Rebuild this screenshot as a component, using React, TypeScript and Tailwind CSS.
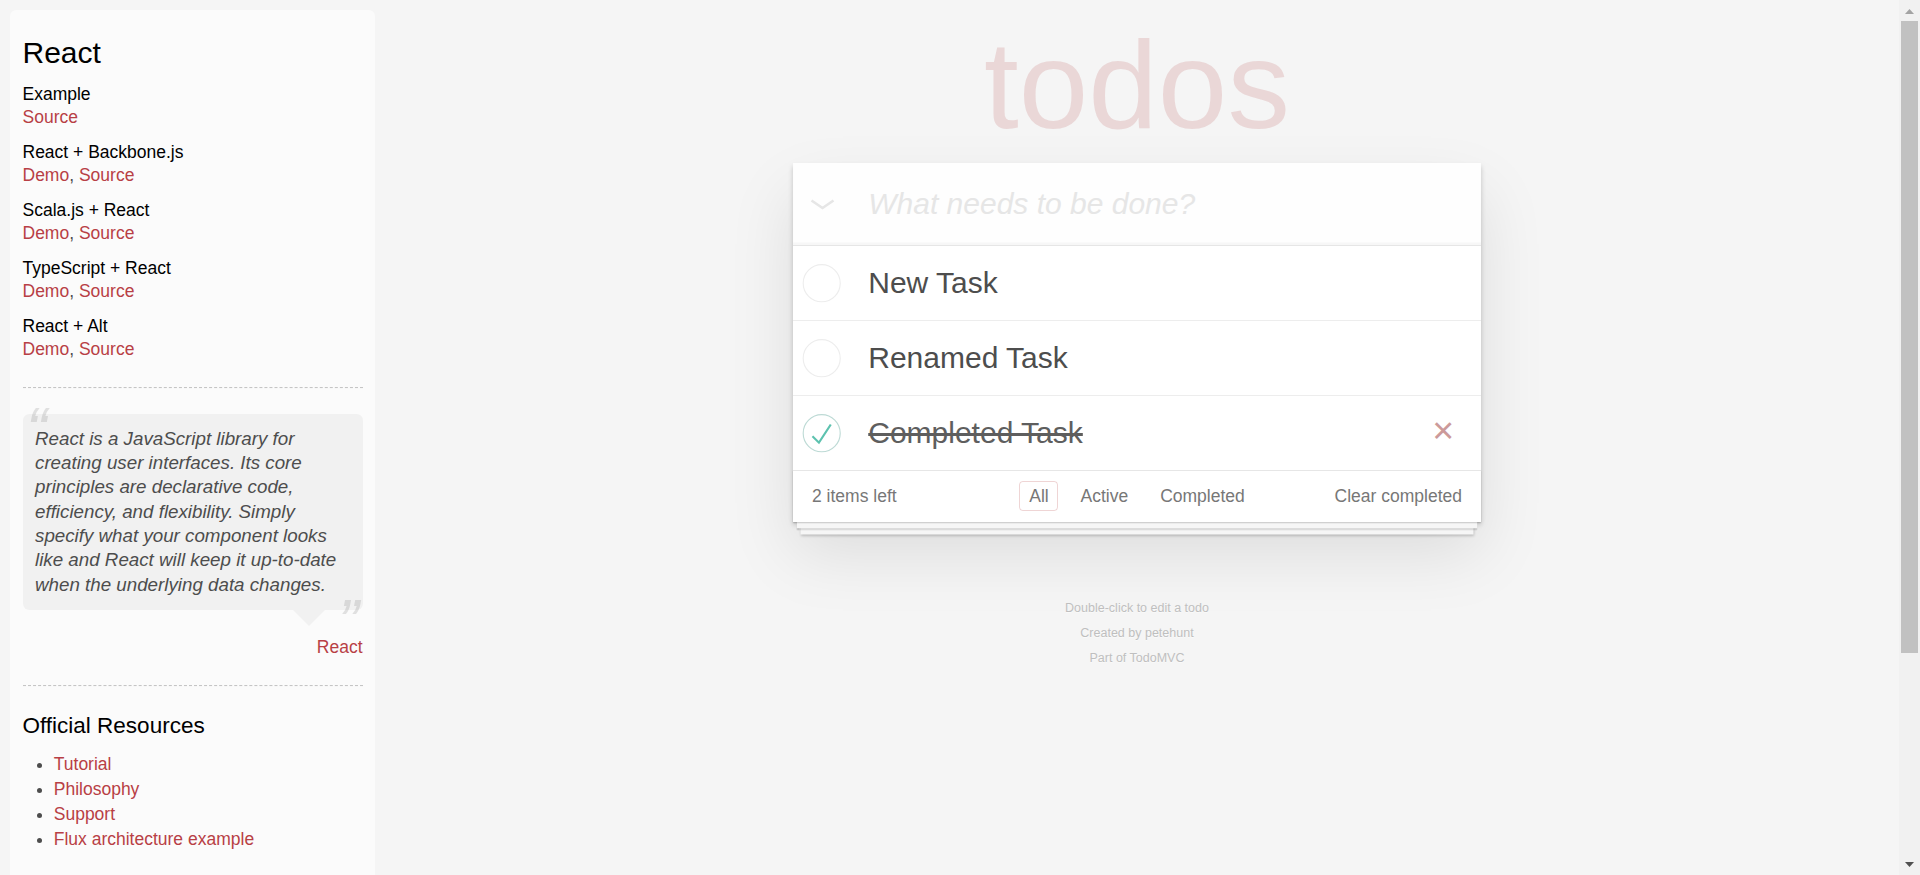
import React from "react";

const groups: { title: string; links: string[] }[] = [
  { title: "Example", links: ["Source"] },
  { title: "React + Backbone.js", links: ["Demo", "Source"] },
  { title: "Scala.js + React", links: ["Demo", "Source"] },
  { title: "TypeScript + React", links: ["Demo", "Source"] },
  { title: "React + Alt", links: ["Demo", "Source"] },
];

const quoteLines = [
  "React is a JavaScript library for",
  "creating user interfaces. Its core",
  "principles are declarative code,",
  "efficiency, and flexibility. Simply",
  "specify what your component looks",
  "like and React will keep it up-to-date",
  "when the underlying data changes.",
];

const resources = ["Tutorial", "Philosophy", "Support", "Flux architecture example"];
const community = ["ReactJS on Stack Overflow", "Google Groups Mailing List", "IRC"];

const todos = [
  { title: "New Task", done: false },
  { title: "Renamed Task", done: false },
  { title: "Completed Task", done: true },
];

function Toggle({ checked }: { checked: boolean }) {
  return (
    <svg width="50" height="50" viewBox="-10 -18 100 135" className="shrink-0">
      <circle
        cx="50"
        cy="50"
        r="50"
        fill="none"
        stroke={checked ? "#bddad5" : "#ededed"}
        strokeWidth="3"
      />
      {checked && <path fill="#5dc2af" d="M72 25L42 71 27 56l-4 4 20 20 34-52z" />}
    </svg>
  );
}

function Dashed({ className }: { className: string }) {
  return (
    <div
      className={
        "h-0 border-t border-b border-dashed border-t-[#c5c5c5] border-b-[#f7f7f7] " + className
      }
    />
  );
}

function Sidebar() {
  return (
    <aside className="flex w-[365px] flex-col rounded-[6.25px] bg-[rgba(255,255,255,0.6)] p-[12.5px] pb-[60px] text-[17.5px] leading-[24.5px] text-[#4d4d4d]">
      <h3 className="mt-[12.5px] text-[30px] leading-[36px] text-black">React</h3>
      {groups.map((g) => (
        <div key={g.title} className="mt-[12.5px]">
          <h5 className="text-[17.5px] leading-[21px] text-black">{g.title}</h5>
          <div className="leading-[24.5px]">
            {g.links.map((l, i) => (
              <React.Fragment key={l}>
                {i > 0 && <span>, </span>}
                <a className="text-[#b83f45]">{l}</a>
              </React.Fragment>
            ))}
          </div>
        </div>
      ))}
      <Dashed className="mt-[26px]" />
      <div className="relative mt-[25px] rounded-[6.25px] bg-[rgba(0,0,0,0.04)] p-[12.5px]">
        <span className="absolute left-[3.75px] top-[-25px] text-[62.5px] leading-[81.25px] italic opacity-[0.15]">
          “
        </span>
        <p className="text-[18.75px] leading-[24.375px] italic">
          {quoteLines.map((l) => (
            <span key={l} className="block whitespace-nowrap">
              {l}
            </span>
          ))}
        </p>
        <span className="absolute bottom-[-52.5px] right-[3.75px] text-[62.5px] leading-[81.25px] italic opacity-[0.15]">
          ”
        </span>
        <div className="absolute right-[37.5px] top-full h-0 w-0 border-[16.25px] border-transparent border-t-[rgba(0,0,0,0.04)]" />
      </div>
      <div className="mt-[25.5px] text-right leading-[24.5px]">
        <a className="text-[#b83f45]">React</a>
      </div>
      <Dashed className="mt-[25px]" />
      <h4 className="mt-[25px] text-[22.5px] leading-[27px] text-black">Official Resources</h4>
      <ul className="mt-[13.5px] ml-[31.25px] list-disc">
        {resources.map((r) => (
          <li key={r} className="leading-[25px]">
            <a className="text-[#b83f45]">{r}</a>
          </li>
        ))}
      </ul>
      <h4 className="mt-[37.5px] text-[22.5px] leading-[27px] text-black">Community</h4>
      <ul className="mt-[12.5px] ml-[31.25px] list-disc">
        {community.map((r) => (
          <li key={r} className="leading-[25px]">
            <a className="text-[#b83f45]">{r}</a>
          </li>
        ))}
      </ul>
    </aside>
  );
}

function TodoApp() {
  return (
    <div className="mx-auto w-[687.5px]">
      <h1 className="pt-[22px] text-center text-[125px] leading-[125px] font-thin text-[rgba(175,47,47,0.15)]">
        todos
      </h1>
      <section className="mt-[15.5px] bg-white shadow-[0_2.5px_5px_0_rgba(0,0,0,0.2),0_31.25px_62.5px_0_rgba(0,0,0,0.1)]">
        <header className="flex h-[82px] items-center bg-[rgba(0,0,0,0.003)] shadow-[inset_0_-2.5px_1.25px_rgba(0,0,0,0.03)]">
          <div className="flex w-[75px] shrink-0 items-center pl-[17px] pt-[2px]">
            <svg width="25" height="11" viewBox="0 0 25 11">
              <polyline
                points="1.5,1.5 12.5,9 23.5,1.5"
                fill="none"
                stroke="#e6e6e6"
                strokeWidth="2.6"
              />
            </svg>
          </div>
          <input
            className="h-full min-w-0 flex-1 bg-transparent pr-[20px] font-['Liberation_Sans',Arial,sans-serif] text-[30px] leading-[42px] text-[#4d4d4d] outline-none placeholder:italic placeholder:text-[#e6e6e6]"
            placeholder="What needs to be done?"
          />
        </header>
        <ul className="border-t border-[#e6e6e6]">
          {todos.map((t, i) => (
            <li
              key={t.title}
              className={
                i < todos.length - 1
                  ? "flex items-center border-b border-[#ededed]"
                  : "flex items-center"
              }
            >
              <Toggle checked={t.done} />
              <label
                className={
                  t.done
                    ? "ml-[6.25px] flex-1 py-[19px] pl-[18.75px] text-[30px] leading-[36px] text-[#5e5e5e] line-through"
                    : "ml-[6.25px] flex-1 py-[19px] pl-[18.75px] text-[30px] leading-[36px] text-[#4d4d4d]"
                }
              >
                {t.title}
              </label>
              {t.done && (
                <button className="mr-[12.5px] mb-[6px] flex h-[50px] w-[50px] items-center justify-center text-[37.5px] leading-[50px] text-[#cc9a9a]">
                  ×
                </button>
              )}
            </li>
          ))}
        </ul>
        <footer className="flex h-[52px] items-center border-t border-[#e6e6e6] px-[18.75px] text-[17.5px] leading-[24.5px] text-[#777] shadow-[0_1.25px_1.25px_rgba(0,0,0,0.2),0_10px_0_-3.75px_#f6f6f6,0_11.25px_1.25px_-3.75px_rgba(0,0,0,0.2),0_20px_0_-7.5px_#f6f6f6,0_21.25px_2.5px_-7.5px_rgba(0,0,0,0.2)]">
          <span className="flex-1 text-left">
            <strong className="font-normal">2</strong> items left
          </span>
          <ul className="flex gap-[12.4px]">
            <li>
              <a className="block rounded-[3.75px] border-[1.25px] border-[rgba(175,47,47,0.2)] px-[8.75px] py-[3.75px] leading-[20px]">
                All
              </a>
            </li>
            <li>
              <a className="block rounded-[3.75px] border-[1.25px] border-transparent px-[8.75px] py-[3.75px] leading-[20px]">
                Active
              </a>
            </li>
            <li>
              <a className="block rounded-[3.75px] border-[1.25px] border-transparent px-[8.75px] py-[3.75px] leading-[20px]">
                Completed
              </a>
            </li>
          </ul>
          <span className="flex-1 text-right">Clear completed</span>
        </footer>
      </section>
      <footer className="mt-[80px] flex flex-col gap-[12.5px] text-center text-[12.5px] leading-[12.5px] text-[#bfbfbf] [text-shadow:0_1.25px_0_rgba(255,255,255,0.5)]">
        <p>Double-click to edit a todo</p>
        <p>
          Created by <a>petehunt</a>
        </p>
        <p>
          Part of <a>TodoMVC</a>
        </p>
      </footer>
    </div>
  );
}

function Scrollbar() {
  return (
    <div className="flex w-[21px] shrink-0 flex-col bg-[#f1f1f1]">
      <div className="flex h-[21px] items-center justify-center pt-[2px]">
        <svg width="9" height="5" viewBox="0 0 9 5">
          <path d="M4.5 0L9 5H0Z" fill="#a3a3a3" />
        </svg>
      </div>
      <div className="mx-[2px] h-[632px] bg-[#c1c1c1]" />
      <div className="flex-1" />
      <div className="flex h-[21px] items-center justify-center">
        <svg width="9" height="5" viewBox="0 0 9 5">
          <path d="M0 0H9L4.5 5Z" fill="#505050" />
        </svg>
      </div>
    </div>
  );
}

export default function App() {
  return (
    <div className="flex h-[875px] w-full overflow-hidden bg-[#f5f5f5] font-['Liberation_Sans',Arial,sans-serif] text-[17.5px] leading-[24.5px] text-[#4d4d4d]">
      <div className="flex min-w-0 flex-1 overflow-hidden">
        <div className="w-[375px] shrink-0 pl-[10px] pt-[10px]">
          <Sidebar />
        </div>
        <main className="min-w-0 flex-1">
          <TodoApp />
        </main>
      </div>
      <Scrollbar />
    </div>
  );
}
